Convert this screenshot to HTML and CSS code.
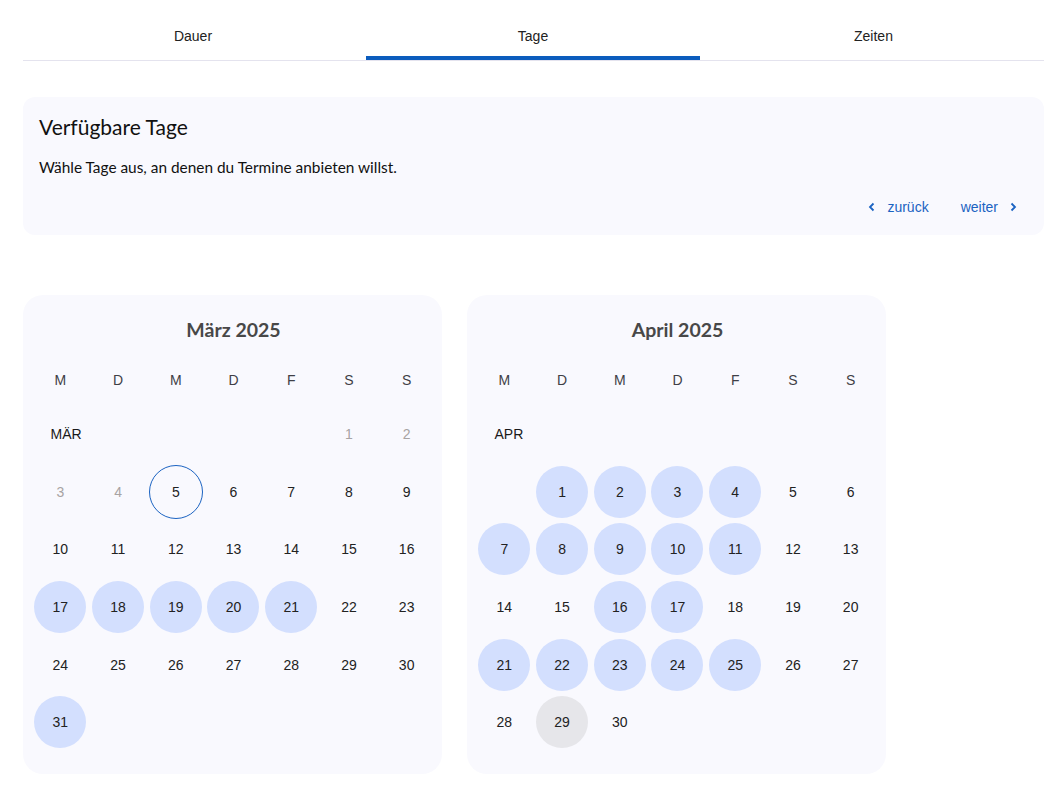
FILE: index.html
```html
<!DOCTYPE html>
<html lang="de">
<head>
<meta charset="utf-8">
<title>Verfügbare Tage</title>
<link rel="stylesheet" href="styles.css">
</head>
<body>
<div class="page">
  <nav class="tabs">
    <div class="tab">Dauer</div>
    <div class="tab active">Tage</div>
    <div class="tab">Zeiten</div>
  </nav>

  <section class="info">
    <h1 class="info-title">Verfügbare Tage</h1>
    <p class="info-text">Wähle Tage aus, an denen du Termine anbieten willst.</p>
    <div class="pager">
      <a class="pager-link" href="#"><svg class="chev" viewBox="0 0 10 10" width="10" height="10"><path d="M6.5 1.5 3 5l3.5 3.5" fill="none" stroke="currentColor" stroke-width="1.8"/></svg><span>zurück</span></a>
      <a class="pager-link" href="#"><span>weiter</span><svg class="chev" viewBox="0 0 10 10" width="10" height="10"><path d="M3.5 1.5 7 5 3.5 8.5" fill="none" stroke="currentColor" stroke-width="1.8"/></svg></a>
    </div>
  </section>

  <div class="months">
    <section class="month">
      <h2 class="month-title">März 2025</h2>
      <div class="grid">
        <div class="wd">M</div><div class="wd">D</div><div class="wd">M</div><div class="wd">D</div><div class="wd">F</div><div class="wd">S</div><div class="wd">S</div>
        <div class="mlabel span5">MÄR</div>
        <div class="day past">1</div><div class="day past">2</div>
        <div class="day past">3</div><div class="day past">4</div><div class="day today">5</div><div class="day">6</div><div class="day">7</div><div class="day">8</div><div class="day">9</div>
        <div class="day">10</div><div class="day">11</div><div class="day">12</div><div class="day">13</div><div class="day">14</div><div class="day">15</div><div class="day">16</div>
        <div class="day sel">17</div><div class="day sel">18</div><div class="day sel">19</div><div class="day sel">20</div><div class="day sel">21</div><div class="day">22</div><div class="day">23</div>
        <div class="day">24</div><div class="day">25</div><div class="day">26</div><div class="day">27</div><div class="day">28</div><div class="day">29</div><div class="day">30</div>
        <div class="day sel">31</div>
      </div>
    </section>

    <section class="month">
      <h2 class="month-title">April 2025</h2>
      <div class="grid">
        <div class="wd">M</div><div class="wd">D</div><div class="wd">M</div><div class="wd">D</div><div class="wd">F</div><div class="wd">S</div><div class="wd">S</div>
        <div class="mlabel span7">APR</div>
        <div class="day col2 sel">1</div><div class="day sel">2</div><div class="day sel">3</div><div class="day sel">4</div><div class="day">5</div><div class="day">6</div>
        <div class="day sel">7</div><div class="day sel">8</div><div class="day sel">9</div><div class="day sel">10</div><div class="day sel">11</div><div class="day">12</div><div class="day">13</div>
        <div class="day">14</div><div class="day">15</div><div class="day sel">16</div><div class="day sel">17</div><div class="day">18</div><div class="day">19</div><div class="day">20</div>
        <div class="day sel">21</div><div class="day sel">22</div><div class="day sel">23</div><div class="day sel">24</div><div class="day sel">25</div><div class="day">26</div><div class="day">27</div>
        <div class="day">28</div><div class="day grey">29</div><div class="day">30</div>
      </div>
    </section>
  </div>
</div>
</body>
</html>
```

FILE: styles.css
```css
* { box-sizing: border-box; }

body {
  margin: 0;
  background: #ffffff;
  font-family: "Liberation Sans", Arial, sans-serif;
  color: #222222;
}

.page {
  margin: 0 20px 0 23px;
}

/* Tabs */
.tabs {
  display: grid;
  grid-template-columns: 340px 340px 1fr;
  border-bottom: 1px solid #e4e3ee;
}

.tab {
  height: 60px;
  padding-top: 27px;
  margin: 0 3px;
  text-align: center;
  font-size: 14px;
  line-height: 18px;
  color: #222222;
  border-bottom: 4px solid transparent;
}

.tab.active {
  border-bottom-color: #0b5cbd;
}

/* Info card */
.info {
  margin-top: 36px;
  background: #f9f9fe;
  border-radius: 12px;
  padding: 16px 26px 18px 16px;
}

.info-title {
  margin: 0;
  font-family: "Lato", "Noto Sans", sans-serif;
  font-weight: 400;
  font-size: 21px;
  line-height: 28px;
  color: #111111;
}

.info-text {
  margin: 14px 0 0;
  font-family: "Lato", "Noto Sans", sans-serif;
  font-size: 15.4px;
  line-height: 24px;
  color: #111111;
}

.pager {
  margin-top: 18px;
  display: flex;
  justify-content: flex-end;
  gap: 32px;
}

.pager-link {
  display: flex;
  align-items: center;
  gap: 10px;
  font-size: 14px;
  line-height: 20px;
  color: #1b63c2;
  text-decoration: none;
}

.chev { display: block; }

/* Months */
.months {
  margin-top: 60px;
  display: flex;
  gap: 25px;
}

.month {
  width: 419px;
  background: #f9f9fe;
  border-radius: 20px;
  padding: 21px 6.5px 23px 8.5px;
}

.month-title {
  margin: 0;
  text-align: center;
  font-family: "Lato", "Noto Sans", sans-serif;
  font-weight: 700;
  font-size: 19.5px;
  line-height: 28px;
  color: #484848;
}

.grid {
  margin-top: 11px;
  display: grid;
  grid-template-columns: repeat(7, 1fr);
  grid-template-rows: 50px;
  grid-auto-rows: 57.7px;
}

.wd {
  display: flex;
  align-items: center;
  justify-content: center;
  font-size: 14px;
  color: #3f3f46;
}

.mlabel {
  display: flex;
  align-items: center;
  padding-left: 19px;
  font-size: 14px;
  color: #1a1a1a;
}
.span5 { grid-column: span 5; }
.span7 { grid-column: span 7; }
.col2 { grid-column-start: 2; }

.day {
  display: flex;
  align-items: center;
  justify-content: center;
  font-size: 14px;
  color: #222222;
  position: relative;
  z-index: 0;
  isolation: isolate;
}

.day::before {
  content: "";
  width: 52px;
  height: 52px;
  border-radius: 50%;
  position: absolute;
  left: 50%;
  top: 50%;
  transform: translate(-50%, -50%);
  z-index: -1;
}

.day.sel::before { background: #d3dffe; }
.day.grey::before { background: #e6e6ea; }
.day.today::before { border: 1px solid #1b63c2; }
.day.past { color: #a8a3a3; }
```
